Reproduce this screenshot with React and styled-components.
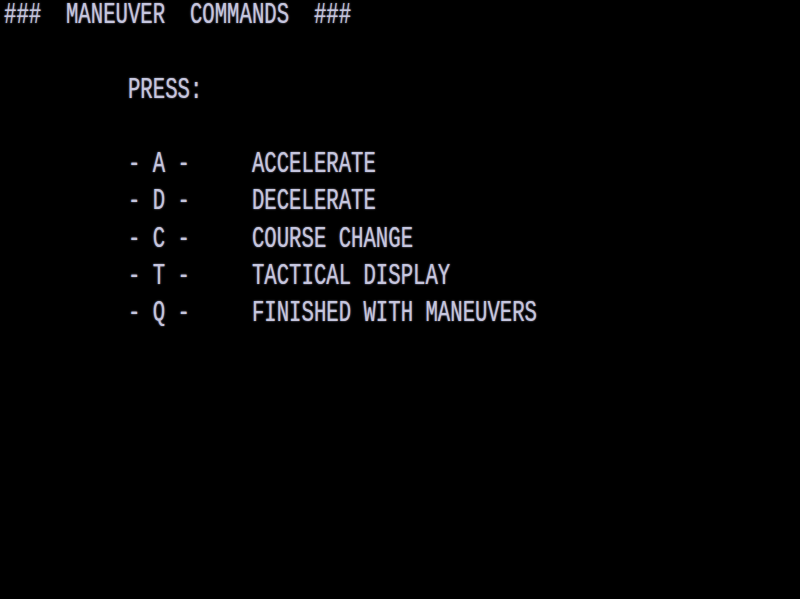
import React from "react";
import styled, { createGlobalStyle } from "styled-components";

const Global = createGlobalStyle`
  html, body {
    margin: 0;
    padding: 0;
    background: #000;
    height: 100%;
  }
  #root {
    height: 100%;
  }
`;

const Screen = styled.div`
  width: 800px;
  min-height: 599px;
  background: #000;
  padding: 1px 0 0 4px;
  box-sizing: border-box;
`;

const Line = styled.div`
  height: 37.25px;
`;

const Text = styled.div`
  font-family: "Liberation Mono", "DejaVu Sans Mono", monospace;
  font-size: 20.667px;
  line-height: 1;
  height: 30px;
  white-space: pre;
  color: #c6c6de;
  text-shadow: 0 0 1.5px rgba(200, 200, 230, 0.8);
  transform: scaleY(${(p) => p.$stretch});
  transform-origin: 0 0;
`;

const lines = [
  "###  MANEUVER  COMMANDS  ###",
  "",
  "          PRESS:",
  "",
  "          - A -     ACCELERATE",
  "          - D -     DECELERATE",
  "          - C -     COURSE CHANGE",
  "          - T -     TACTICAL DISPLAY",
  "          - Q -     FINISHED WITH MANEUVERS",
];

export default function App() {
  return (
    <>
      <Global />
      <Screen>
        {lines.map((l, i) => (
          <Line key={i}>
            <Text $stretch={1.45}>{l || " "}</Text>
          </Line>
        ))}
      </Screen>
    </>
  );
}
